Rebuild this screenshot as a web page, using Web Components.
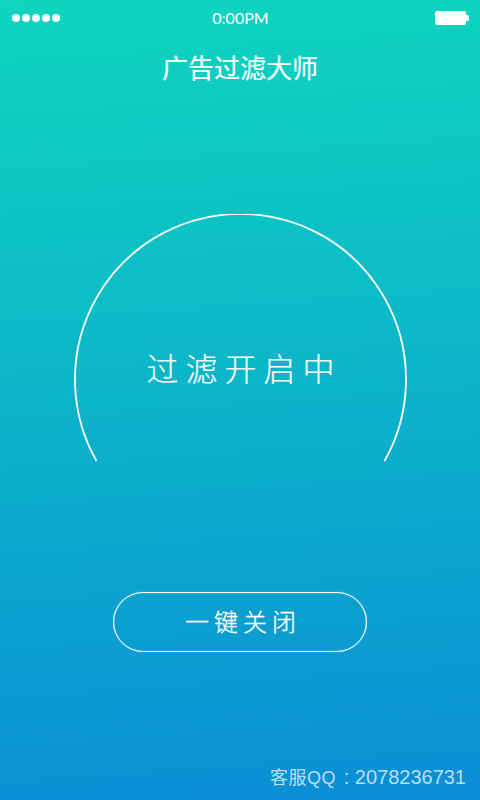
<!DOCTYPE html>
<html lang="zh">
<head>
<meta charset="utf-8">
<title>广告过滤大师</title>
<style>
  html, body { margin: 0; height: 100%; }
  body { font-family: "Lato", "Noto Sans CJK SC", sans-serif; color: #fff; }
</style>
</head>
<body>
<filter-app>
  <status-bar time="0:00PM"></status-bar>
  <app-title>广告过滤大师</app-title>
  <arc-gauge>过滤开启中</arc-gauge>
  <pill-button>一键关闭</pill-button>
  <support-line><span class="small">客服QQ</span> : 2078236731</support-line>
</filter-app>
<script>
class FilterApp extends HTMLElement {
  constructor() {
    super();
    this.attachShadow({ mode: 'open' });
    this.shadowRoot.innerHTML = `
    <style>
      :host {
        display: flex;
        flex-direction: column;
        width: 480px;
        height: 800px;
        overflow: hidden;
        background: linear-gradient(176deg, #0ed5be 0%, #0cb9c8 42%, #0a8dd6 100%);
      }
    </style>
    <slot></slot>`;
  }
}

class StatusBar extends HTMLElement {
  constructor() {
    super();
    this.attachShadow({ mode: 'open' });
    this.shadowRoot.innerHTML = `
    <style>
      :host {
        display: grid;
        grid-template-columns: 1fr auto 1fr;
        align-items: center;
        height: 35px;
        padding: 0 11px 0 12px;
      }
      .dots { display: flex; gap: 2px; }
      .dots i { width: 8px; height: 8px; border-radius: 50%; background: #fff; }
      .time { font: 400 16px "Lato", sans-serif; }
      svg { justify-self: end; display: block; }
    </style>
    <div class="dots"><i></i><i></i><i></i><i></i><i></i></div>
    <span class="time">${this.getAttribute('time')}</span>
    <svg width="34" height="14" viewBox="0 0 34 14">
      <rect x="0" y="0" width="31" height="14" rx="2" fill="#fff"/>
      <path d="M31 4h1.5a1.5 1.5 0 0 1 1.5 1.5v3a1.5 1.5 0 0 1-1.5 1.5H31z" fill="#fff"/>
    </svg>`;
  }
}

class AppTitle extends HTMLElement {
  constructor() {
    super();
    this.attachShadow({ mode: 'open' });
    this.shadowRoot.innerHTML = `
    <style>
      :host {
        display: block;
        margin-top: 13px;
        height: 38px;
        text-align: center;
        font: 400 26px/38px "Noto Sans CJK SC", sans-serif;
        -webkit-text-stroke: .2px #fff;
      }
    </style>
    <slot></slot>`;
  }
}

class ArcGauge extends HTMLElement {
  constructor() {
    super();
    this.attachShadow({ mode: 'open' });
    this.shadowRoot.innerHTML = `
    <style>
      :host {
        display: grid;
        justify-items: center;
        margin-top: 128px;
        height: 250px;
      }
      svg, .label { grid-area: 1 / 1; }
      svg { display: block; }
      .label {
        margin-top: 130px;
        height: 46px;
        font: 300 32px/46px "Noto Sans CJK SC", sans-serif;
        letter-spacing: 7px;
        padding-left: 8px;
        -webkit-text-stroke: .2px #fff;
      }
    </style>
    <svg width="340" height="250" viewBox="0 0 340 250">
      <path d="M26.5 247A165.5 165.5 0 1 1 314.5 247" fill="none" stroke="#fff" stroke-width="1.8"/>
    </svg>
    <div class="label"><slot></slot></div>`;
  }
}

class PillButton extends HTMLElement {
  constructor() {
    super();
    this.attachShadow({ mode: 'open' });
    this.shadowRoot.innerHTML = `
    <style>
      :host {
        display: flex;
        align-items: center;
        justify-content: center;
        box-sizing: border-box;
        align-self: center;
        width: 254px;
        height: 60px;
        margin-top: 128px;
        padding: 0 0 4px 6px;
        border: 1px solid #fff;
        border-radius: 30px;
        box-shadow: 0 0 1px rgba(255,255,255,.8), inset 0 0 1px rgba(255,255,255,.8);
        font: 300 24px "Noto Sans CJK SC", sans-serif;
        letter-spacing: 5px;
        -webkit-text-stroke: .3px #fff;
      }
    </style>
    <slot></slot>`;
  }
}

class SupportLine extends HTMLElement {
  constructor() {
    super();
    this.attachShadow({ mode: 'open' });
    this.shadowRoot.innerHTML = `
    <style>
      :host {
        display: block;
        margin-top: 111px;
        padding-right: 14px;
        height: 28px;
        text-align: right;
        color: rgba(255,255,255,.72);
        font: 400 20px/28px "Liberation Sans", "Noto Sans CJK SC", sans-serif;
      }
      ::slotted(.small) { font-size: 18px; letter-spacing: .5px; margin-right: 2px; }
    </style>
    <slot></slot>`;
  }
}

customElements.define('filter-app', FilterApp);
customElements.define('status-bar', StatusBar);
customElements.define('app-title', AppTitle);
customElements.define('arc-gauge', ArcGauge);
customElements.define('pill-button', PillButton);
customElements.define('support-line', SupportLine);
</script>
</body>
</html>
